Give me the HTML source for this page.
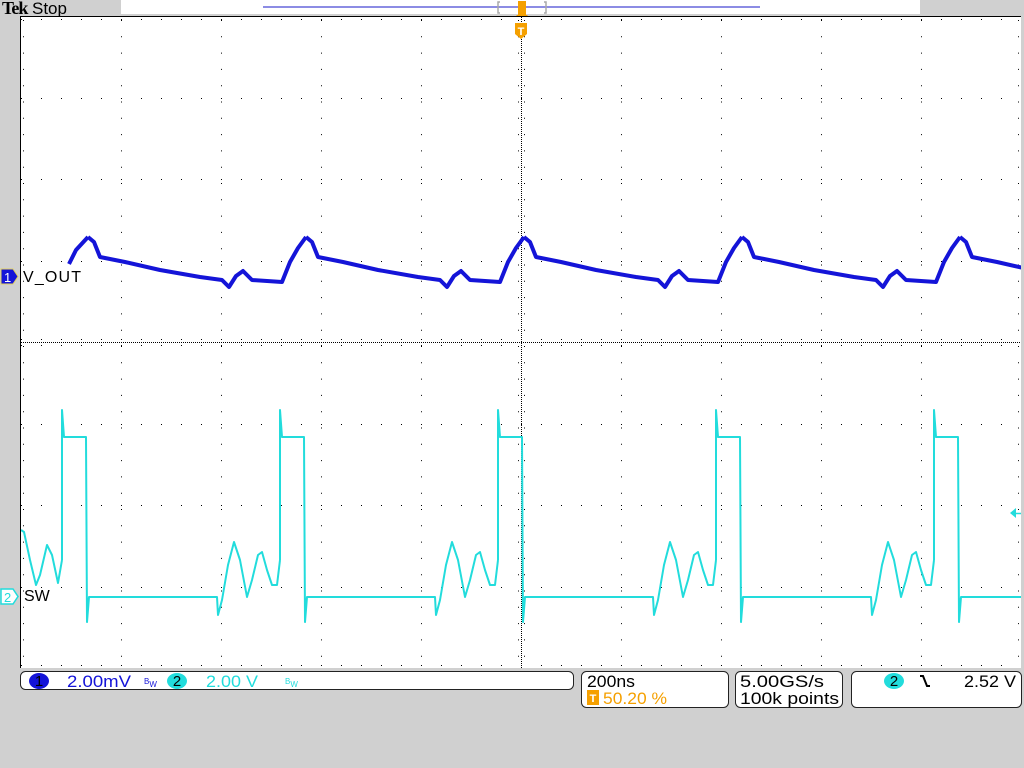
<!DOCTYPE html>
<html><head><meta charset="utf-8"><style>
html,body{margin:0;padding:0;width:1024px;height:768px;background:#d0d0d0;overflow:hidden;font-family:"Liberation Sans",sans-serif}
svg{position:absolute;left:0;top:0}
</style></head><body>
<svg width="1024" height="768" viewBox="0 0 1024 768">
<defs>
<clipPath id="g"><rect x="21" y="17" width="1000" height="651"/></clipPath>
<path id="vo" d="M88,237 L94,242 L100,257 L125,262 L160,270 L200,277 L222,280 L229,287 L236,276 L243,271 L252,280 L282,282 L290,262 L298,248 L306,237" fill="none"/>
<path id="sw" d="M62,560 L62,410 L64,437 L86,437 L87,622 L89,597 L217,597 L218,615 L222,600 L228,565 L234,542 L240,560 L247,597 L252,580 L258,555 L262,552 L267,570 L272,585 L277,585 L280,560" fill="none"/>
</defs>
<rect x="0" y="0" width="1024" height="768" fill="#d0d0d0"/>
<rect x="121" y="0" width="799" height="14" fill="#fff"/>
<line x1="263" y1="7" x2="760" y2="7" stroke="#1818c8" stroke-width="1"/>
<path d="M500,2 h-2 v11 h2 M544,2 h2 v11 h-2" stroke="#aaa" stroke-width="1.5" fill="none"/>
<rect x="518" y="1" width="8" height="14" fill="#f5a000"/>
<path d="M516,15 h12 l-6,6z" fill="#f5a000"/>
<text x="2" y="14" font-family="Liberation Serif,serif" font-weight="bold" font-size="18" fill="#000" letter-spacing="-1">Tek</text>
<text x="32" y="14" font-size="17" fill="#000">Stop</text>
<rect x="20" y="16" width="1001" height="652" fill="#fff"/>
<line x1="20.5" y1="16" x2="20.5" y2="668" stroke="#000"/>
<line x1="20" y1="16.5" x2="1021" y2="16.5" stroke="#000"/>
<g stroke="#000" stroke-width="1">
<g stroke-dasharray="1 15.3">
<line x1="121.5" y1="20" x2="121.5" y2="668"/><line x1="221.5" y1="20" x2="221.5" y2="668"/><line x1="321.5" y1="20" x2="321.5" y2="668"/><line x1="421.5" y1="20" x2="421.5" y2="668"/><line x1="621.5" y1="20" x2="621.5" y2="668"/><line x1="721.5" y1="20" x2="721.5" y2="668"/><line x1="821.5" y1="20" x2="821.5" y2="668"/><line x1="921.5" y1="20" x2="921.5" y2="668"/>
</g>
<g stroke-dasharray="1 19">
<line x1="21" y1="98.5" x2="1021" y2="98.5"/><line x1="21" y1="179.5" x2="1021" y2="179.5"/><line x1="21" y1="261.5" x2="1021" y2="261.5"/><line x1="21" y1="424.5" x2="1021" y2="424.5"/><line x1="21" y1="505.5" x2="1021" y2="505.5"/><line x1="21" y1="587.5" x2="1021" y2="587.5"/>
</g>
<g stroke-dasharray="1 1">
<line x1="521.5" y1="17" x2="521.5" y2="668"/>
<line x1="21" y1="342.5" x2="1021" y2="342.5"/>
</g>
<g stroke-dasharray="1 19">
<line x1="21" y1="339.5" x2="1021" y2="339.5"/><line x1="21" y1="345.5" x2="1021" y2="345.5"/>
<line x1="21" y1="19.5" x2="1021" y2="19.5"/><line x1="21" y1="665.5" x2="1021" y2="665.5"/>
</g>
<g stroke-dasharray="1 15.3">
<line x1="518.5" y1="20" x2="518.5" y2="668"/><line x1="524.5" y1="20" x2="524.5" y2="668"/>
<line x1="23.5" y1="20" x2="23.5" y2="668"/><line x1="1018.5" y1="20" x2="1018.5" y2="668"/>
</g>
</g>
<path d="M515,23 h12 v11 l-6,5 l-6,-5z" fill="#f5a000"/>
<text x="521" y="35" font-size="11" font-weight="bold" fill="#fff" text-anchor="middle">T</text>
<g clip-path="url(#g)" stroke-linejoin="round">
<g stroke="#1414d8" stroke-width="4">
<path d="M69,264 L76,250 L88,237" fill="none"/>
<use href="#vo"/><use href="#vo" transform="translate(218,0)"/><use href="#vo" transform="translate(436,0)"/><use href="#vo" transform="translate(654,0)"/><use href="#vo" transform="translate(872,0)"/>
</g>
<g stroke="#22dcdc" stroke-width="2">
<path d="M21,530 L24,532 L30,560 L36,585 L40,575 L47,545 L52,555 L58,583 L62,560" fill="none"/>
<use href="#sw"/><use href="#sw" transform="translate(218,0)"/><use href="#sw" transform="translate(436,0)"/><use href="#sw" transform="translate(654,0)"/><use href="#sw" transform="translate(872,0)"/>
</g>
</g>
<path d="M1016,508 v10 l-6,-5z" fill="#22dcdc"/>
<line x1="1012" y1="513.5" x2="1021" y2="513.5" stroke="#22dcdc" stroke-width="1.5"/>
<path d="M1,269 h12 l5,7.5 l-5,7.5 h-12z" fill="#1414d8" stroke="#e0d060" stroke-width="1"/>
<text x="4" y="282" font-size="13" fill="#fff">1</text>
<path d="M1,589 h12 l5,7.5 l-5,7.5 h-12z" fill="#fff" stroke="#22dcdc" stroke-width="1.5"/>
<text x="4" y="602" font-size="13" fill="#22dcdc">2</text>
<text x="23" y="282" font-size="16" fill="#000" textLength="58">V_OUT</text>
<text x="24" y="601" font-size="16" fill="#000">SW</text>
<g fill="#fff" stroke="#222" stroke-width="1">
<rect x="20.5" y="671.5" width="553" height="18" rx="5"/>
<rect x="581.5" y="671.5" width="147" height="36" rx="5"/>
<rect x="735.5" y="671.5" width="107" height="36" rx="5"/>
<rect x="851.5" y="671.5" width="170" height="36" rx="5"/>
</g>
<ellipse cx="39" cy="681" rx="10" ry="8" fill="#1414d8"/>
<text x="39" y="686" font-size="15" text-anchor="middle" fill="#000">1</text>
<text x="67" y="687" font-size="17" fill="#1414d8" textLength="64" lengthAdjust="spacingAndGlyphs">2.00mV</text>
<text x="144" y="684" font-size="8" fill="#1414d8">B<tspan dy="3">W</tspan></text>
<ellipse cx="177" cy="681" rx="10" ry="8" fill="#22dcdc"/>
<text x="177" y="686" font-size="15" text-anchor="middle" fill="#000">2</text>
<text x="206" y="687" font-size="17" fill="#22dcdc" textLength="52" lengthAdjust="spacingAndGlyphs">2.00 V</text>
<text x="285" y="684" font-size="8" fill="#22dcdc">B<tspan dy="3">W</tspan></text>
<text x="587" y="687" font-size="17" fill="#000" textLength="48" lengthAdjust="spacingAndGlyphs">200ns</text>
<rect x="587" y="690" width="12" height="15" fill="#f5a000"/>
<text x="593" y="702" font-size="11" font-weight="bold" fill="#fff" text-anchor="middle">T</text>
<text x="603" y="704" font-size="17" fill="#f5a000" textLength="64" lengthAdjust="spacingAndGlyphs">50.20 %</text>
<text x="740" y="687" font-size="17" fill="#000" textLength="84" lengthAdjust="spacingAndGlyphs">5.00GS/s</text>
<text x="740" y="704" font-size="17" fill="#000" textLength="99" lengthAdjust="spacingAndGlyphs">100k points</text>
<ellipse cx="894" cy="681" rx="10" ry="8" fill="#22dcdc"/>
<text x="894" y="686" font-size="15" text-anchor="middle" fill="#000">2</text>
<path d="M920,676 h3 l4,10 h3" stroke="#000" stroke-width="2" fill="none"/>
<text x="1016" y="687" font-size="17" fill="#000" text-anchor="end" textLength="52" lengthAdjust="spacingAndGlyphs">2.52 V</text>
</svg>
</body></html>
